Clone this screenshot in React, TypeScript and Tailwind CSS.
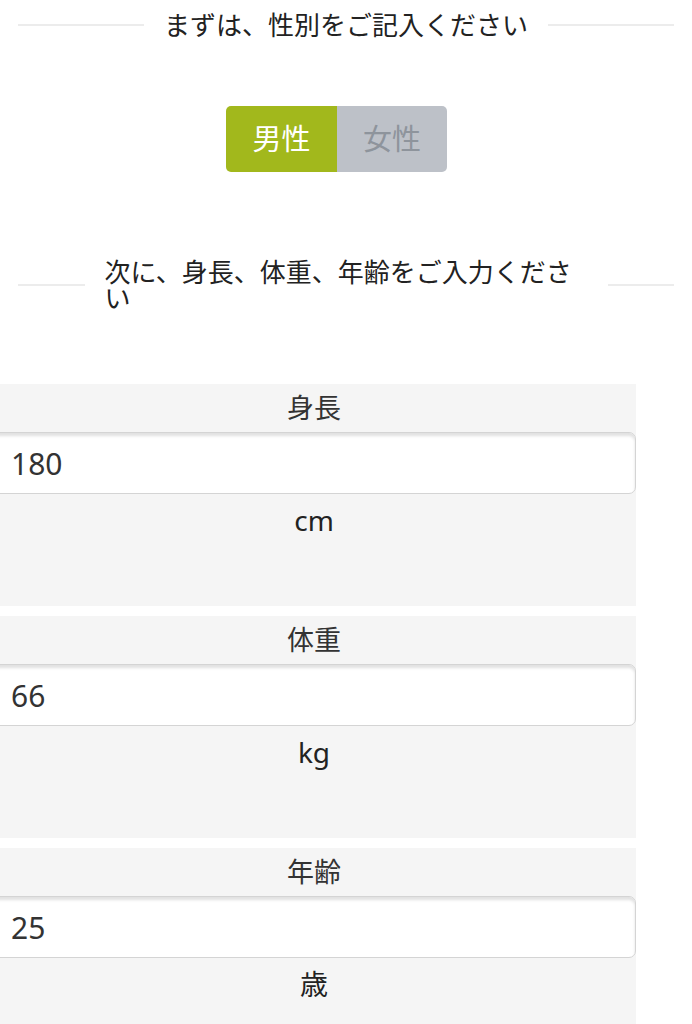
import { useState } from "react";

const font = { fontFamily: '"Noto Sans", "Noto Sans CJK JP", sans-serif' };

function SectionTitle({ children, textClass }: { children: React.ReactNode; textClass: string }) {
  return (
    <div className="flex items-center px-[18px]">
      <div className="h-[2px] flex-1 bg-[#ececec]" />
      <div className={`px-[20px] text-[26px] leading-[26px] text-[#222] ${textClass}`}>{children}</div>
      <div className="h-[2px] flex-1 bg-[#ececec]" />
    </div>
  );
}

function Field({ label, value, unit }: { label: string; value: string; unit: string }) {
  return (
    <div className="-ml-[8px] h-[222px] w-[644px] bg-[#f5f5f5] pt-[10px]">
      <div className="text-center text-[27px] leading-[28px] text-[#333]">{label}</div>
      <input
        defaultValue={value}
        className="mt-[10px] block h-[62px] w-full rounded-[7px] border border-[#d4d4d4] bg-white pl-[18px] text-[30px] text-[#333] shadow-[inset_0_3px_3px_rgba(0,0,0,0.12)] outline-none"
        style={font}
      />
      <div className="mt-[12px] text-center text-[28px] leading-[28px] text-[#222]">{unit}</div>
    </div>
  );
}

export default function App() {
  const [male, setMale] = useState(true);
  return (
    <div className="min-h-screen overflow-hidden bg-white" style={font}>
      <div className="pt-[12px]">
        <SectionTitle textClass="whitespace-nowrap">まずは、性別をご記入ください</SectionTitle>
      </div>

      <div className="mt-[68px] flex justify-center pr-[19px]">
        <div className="flex h-[66px] overflow-hidden rounded-[5px]">
          <button
            onClick={() => setMale(true)}
            className={`w-[111px] text-[29px] ${male ? "bg-[#a2b81c] text-white" : "bg-[#bdc1c8] text-[#8e949c]"}`}
          >
            男性
          </button>
          <button
            onClick={() => setMale(false)}
            className={`w-[110px] text-[29px] ${!male ? "bg-[#a2b81c] text-white" : "bg-[#bdc1c8] text-[#8e949c]"}`}
          >
            女性
          </button>
        </div>
      </div>

      <div className="mt-[87px]">
        <SectionTitle textClass="w-[523px] shrink-0">次に、身長、体重、年齢をご入力ください</SectionTitle>
      </div>

      <div className="mt-[73px] flex flex-col gap-[10px]">
        <Field label="身長" value="180" unit="cm" />
        <Field label="体重" value="66" unit="kg" />
        <Field label="年齢" value="25" unit="歳" />
      </div>
    </div>
  );
}
